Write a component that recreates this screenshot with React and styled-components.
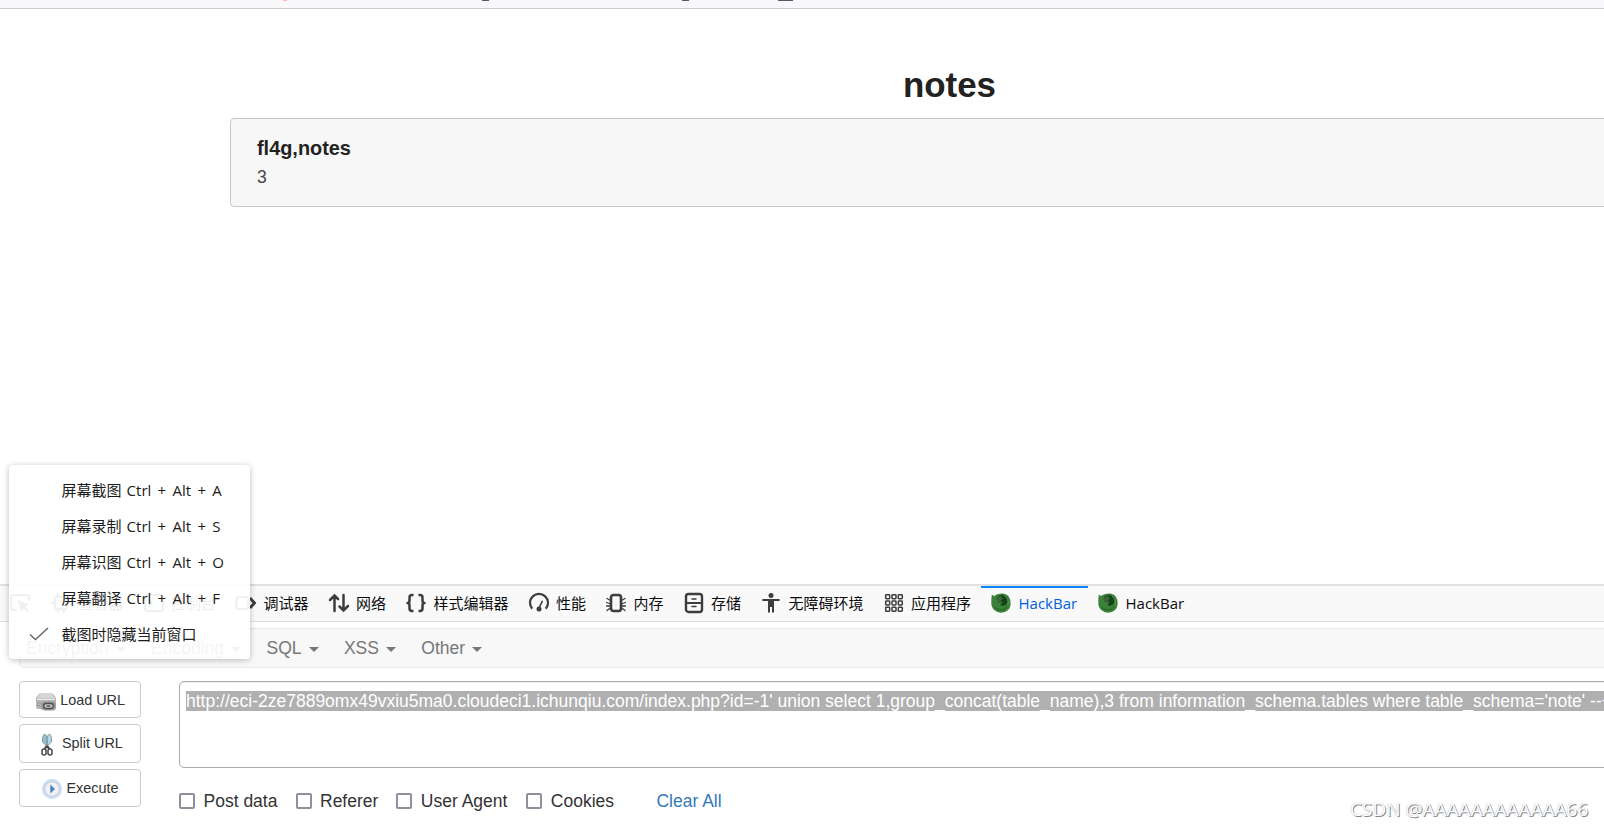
import React from 'react';
import styled, { createGlobalStyle } from 'styled-components';

const Global = createGlobalStyle`
  *, *::before, *::after { box-sizing: border-box; }
  body { margin: 0; background: #fff; overflow: hidden; font-family: "Liberation Sans", Arial, sans-serif; }
`;
const uiFont = '"Open Sans", "Noto Sans CJK SC", sans-serif';

const Page = styled.div`
  position: relative; width: 1604px; height: 828px; overflow: hidden;
  display: flex; flex-direction: column; background: #fff;
`;
const BrowserEdge = styled.div`
  flex: none; height: 9px; background: #f9f9fb; border-bottom: 1px solid #ccc;
  display: flex; padding-left: 283px;
`;
const EdgeMark = styled.i`
  width: ${p => p.$w}px; height: 1px; margin-right: ${p => p.$gap || 0}px; background: ${p => p.$color || '#5b5b66'};
`;
const Site = styled.main`
  flex: none; height: 575px; padding: 54px 0 0 230px;
`;
const SiteTitle = styled.h1`
  margin: 0; width: 1439px; height: 55px; text-align: center;
  font-size: 34.9px; line-height: 43px; color: #222;
`;
const Card = styled.article`
  width: 1440px; height: 89px; padding: 16px 26px; border: 1px solid #c8c8c8; border-radius: 4px; background: #f7f7f7;
`;
const CardTitle = styled.h2`
  margin: 0 0 1px; font-size: 19.9px; line-height: 26px; color: #222; font-variant-ligatures: none;
`;
const CardText = styled.p`
  margin: 0; font-size: 17.5px; line-height: 31px; color: #444;
`;

const ToolTabs = styled.nav`
  flex: none; height: 38px; display: flex; background: #f9f9fa;
  border-top: 2px solid #e0e0e1; border-bottom: 1px solid #e0e0e1;
  font: 15px ${uiFont}; color: #0c0c0d;
`;
const Picker = styled.div`
  flex: none; width: 41px; padding-left: 10px; display: flex; align-items: center;
  &::after { content: ""; width: 1px; height: 24px; background: #ddd; margin-left: 10px; }
`;
const Tab = styled.div`
  display: flex; align-items: center; gap: 7.5px; padding: 0 10px; white-space: nowrap; flex: none;
  line-height: 33px; width: ${p => p.$w}px;
  color: ${p => (p.$active ? '#0060df' : 'inherit')};
  box-shadow: ${p => (p.$active ? 'inset 0 2px #0a84ff' : 'none')};
  span { padding-bottom: 1px; }
  svg { margin-top: -2px; }
`;
const Glyph = styled.svg`
  flex: none; width: 20px; height: 20px; fill: none; stroke: #3d3d3e; stroke-width: 2.2;
  stroke-linecap: round; stroke-linejoin: round; overflow: visible;
`;

const CategoryBar = styled.nav`
  flex: none; height: 40px; margin: 6px 0 0 19px; padding-left: 6px;
  display: flex; gap: 25px; width: 1640px; border: 1px solid #e7e7e7; border-radius: 5px; background: #f8f8f8;
  font-size: 17.5px; line-height: 37px; color: #777;
`;
const Category = styled.span`
  display: flex; align-items: center; gap: 7.4px;
  &::after { content: ""; margin-top: 3px; border: 5px solid transparent; border-top-color: #777; border-bottom: 0; }
`;
const Workspace = styled.section`
  display: flex; gap: 38px; padding: 13px 0 0 19px; width: 1700px;
`;
const Actions = styled.div`
  width: 122px; display: flex; flex-direction: column; gap: 6px;
`;
const Action = styled.button`
  height: ${p => p.$h}px; padding: 0 0 ${p => p.$lift || 0}px ${p => p.$left}px; display: flex; align-items: center; gap: ${p => p.$gap}px;
  background: #fff; border: 1px solid #ccc; border-radius: 4px;
  font: 14.4px "Liberation Sans", Arial, sans-serif; color: #333; white-space: nowrap;
  svg { flex: none; margin-top: ${p => p.$drop}px; }
`;
const Editor = styled.div`
  flex: 1;
`;
const UrlBox = styled.div`
  height: 87px; padding: 9px 6px; border: 1px solid #ababab; border-radius: 5px;
  box-shadow: inset 0 1px 1px rgba(0,0,0,.075);
`;
const Selected = styled.span`
  display: block; height: 20px; line-height: 20px; font-size: 17.5px; white-space: nowrap;
  background: #b0b0b0; color: #fff;
`;
const Options = styled.div`
  height: 24px; margin-top: 21px; display: flex; align-items: center; font-size: 17.5px; line-height: 24px; color: #333;
`;
const Option = styled.label`
  display: flex; align-items: center; gap: 8.5px; width: ${p => p.$w}px; white-space: nowrap;
`;
const Box = styled.input`
  appearance: none; flex: none; width: 16px; height: 16px; margin: 0 0 1px; border: 2px solid #8f8f9d; border-radius: 2px; background: #fff;
`;
const ClearLink = styled.a`
  color: #337ab7;
`;

const Menu = styled.div`
  position: absolute; left: 9px; top: 465px; width: 241px; height: 194px; padding: 7px 0;
  background: rgba(255,255,255,.92); border-radius: 4px; box-shadow: 0 1px 6px rgba(0,0,0,.25);
  font: 15px ${uiFont}; color: #1c1c1c;
`;
const MenuItem = styled.div`
  height: 36px; line-height: 35px; display: flex; align-items: center; white-space: nowrap;
`;
const Keys = styled.span`
  margin-left: 5.2px; word-spacing: 2.4px;
`;
const CheckSlot = styled.span`
  width: 52.4px; padding-left: 20px; display: flex;
`;
const Watermark = styled.div`
  position: absolute; left: 1350px; top: 796px; font: 19px/27px ${uiFont}; color: #fff; white-space: nowrap;
  text-shadow: 1px 1px 0 #888, 0 0 1px #aaa;
`;

const icons = {
  pick: <Glyph viewBox="0 0 20 20"><path d="M6 16H3.5A2.5 2.5 0 0 1 1 13.500V3.500A2.500 2.500 0 0 1 3.500 1H16.500A2.500 2.500 0 0 1 19 3.500V6" /><path d="M8 6l3 12 2.500-4 4 4 1.500-1.500-4-4 4-2z" fill="#3d3d3e" stroke="none" /></Glyph>,
  inspector: <Glyph viewBox="0 0 20 20"><rect x="4" y="4" width="12" height="12" rx="2" /><path d="M7 1v2M13 1v2M7 17v2M13 17v2M1 10h2M17 10h2" /></Glyph>,
  console: <Glyph viewBox="0 0 20 20"><rect x="1" y="2" width="18" height="16" rx="2.500" /><path d="M5 7l3 3-3 3" /></Glyph>,
  debug: <Glyph viewBox="0 0 20 20"><rect x="0.500" y="4" width="12" height="12" rx="2.500" /><path d="M14 5l4.500 5L14 15" strokeWidth="2.800" strokeLinecap="butt" strokeLinejoin="miter" /></Glyph>,
  network: <Glyph viewBox="0 0 20 20"><path d="M5.500 18V2.500M1 7l4.500-4.500L9 6M14.500 2v15.500M10.500 13.500l4 4 4.500-4.500" strokeWidth="2.500" strokeLinejoin="miter" /></Glyph>,
  style: <Glyph viewBox="0 0 20 20"><path d="M7.500 2H6Q3.500 2 3.500 4.500V7.500Q3.500 10 1.500 10 3.500 10 3.500 12.500V15.500Q3.500 18 6 18H7.500M12.500 2H14Q16.500 2 16.500 4.500V7.500Q16.500 10 18.500 10 16.500 10 16.500 12.500V15.500Q16.500 18 14 18H12.500" strokeWidth="2.500" strokeLinecap="butt" /></Glyph>,
  perf: <Glyph viewBox="0 0 20 20"><path d="M3.200 15.800A9 9 0 1 1 16.800 15.800" strokeLinecap="butt" /><path d="M10.500 14L13.200 8.500" strokeWidth="1.700" /><circle cx="10" cy="16" r="2.500" fill="#3d3d3e" stroke="none" /></Glyph>,
  memory: <Glyph viewBox="0 0 20 20"><rect x="5" y="2" width="10" height="16" rx="2.500" strokeWidth="2.600" /><path d="M3.600 7L1 5.500M3.600 10.500L.5 9.500M3.600 13L.5 13M3.600 15.500L1 17.500M16.400 7L19 5.500M16.400 10.500L19.500 9.500M16.400 13L19.500 13M16.400 15.500L19 17.500" strokeWidth="1.300" /></Glyph>,
  storage: <Glyph viewBox="0 0 20 20"><rect x="2" y="1" width="16" height="18" rx="2.500" strokeWidth="2.400" /><path d="M2 10h16" strokeWidth="2" /><path d="M8 6h4M8 13.500h4" strokeWidth="1.500" /></Glyph>,
  access: <Glyph viewBox="0 0 20 20"><g fill="#3d3d3e" stroke="none"><circle cx="10" cy="2.500" r="2.500" /><path d="M2 6H18Q18.800 6 18.800 7T18 8H13V19.500H11V14H9V19.500H7V8H2Q1.200 8 1.200 7T2 6Z" /></g></Glyph>,
  apps: <Glyph viewBox="0 0 20 20" ><g strokeWidth="1.500">{[1.700, 8, 14.300].map(y => [1.700, 8, 14.300].map(x => <rect key={`${x}-${y}`} x={x} y={y} width="4" height="4" rx=".7" />))}</g></Glyph>,
  hack: <Glyph viewBox="0 0 20 20"><g stroke="none"><path d="M.8 1.500L3 3Q6 .2 11 .4 16 .6 18 4 20 7 19.700 11 19 19 10 19.700 2 19 .4 12 0 7 .8 1.500Z" fill="#3b8339" /><path d="M6 4Q11 0 16 4 18 7 16.500 10 14 14 9 12 11 11 11 9L7 7Z" fill="#17431b" /><path d="M5 6Q7 3 10 3L12 6 9 8 10 10 7 10Z" fill="#3f653b" /><path d="M2 9Q3 16 10 16 15 16 17 11 16 18 10 18 3 18 2 9Z" fill="#2c6c2c" /><path d="M14 3Q18 6 17 11" fill="none" stroke="#5ca653" strokeWidth="1" /></g></Glyph>,
};

const LoadIcon = () => (
  <svg width="20" height="19" viewBox="0 0 20 19">
    <path d="M4 1h12q3 2 4 6v8q0 2-2 2H2q-2 0-2-2V7Q1 3 4 1Z" fill="#b5b5b5" />
    <path d="M4 1h12l3 5.500H1Z" fill="#d6d6d6" />
    <path d="M1 7.500h18" stroke="#eee" />
    <path d="M1 11h4M1 13.500h3" stroke="#999" />
    <rect x="5" y="9.500" width="15" height="9" rx="4" fill="#999" />
    <rect x="7.700" y="11.500" width="9.600" height="5" rx="2.400" fill="#ccc" stroke="#4c4c4c" strokeWidth="1.300" />
    <path d="M10.500 14h4" stroke="#444" strokeWidth="1.300" />
  </svg>
);
const ScissorsIcon = () => (
  <svg width="12" height="24" viewBox="0 0 12 24">
    <path d="M5.600 13L1.500 9Q.5 4 3.500 1L5.700 3Z" fill="#9bc0cd" stroke="#7d9ba6" />
    <path d="M6.400 13L10.500 9Q11.500 4 8.500 1L6.300 3Z" fill="#b8d6df" stroke="#7d9ba6" />
    <path d="M6 13L3.500 16M6 13L8.500 16" stroke="#444" strokeWidth="2" />
    <rect x="1" y="16" width="4" height="6" rx="2" fill="none" stroke="#505050" strokeWidth="1.600" />
    <rect x="7" y="16" width="4" height="6" rx="2" fill="none" stroke="#505050" strokeWidth="1.600" />
  </svg>
);
const RunIcon = () => (
  <svg width="20" height="20" viewBox="0 0 20 20">
    <circle cx="10" cy="10" r="9" fill="#e6eaf2" stroke="#c6ddf8" strokeWidth="2" />
    <circle cx="10" cy="10" r="7.300" fill="#f1f2f6" stroke="#c3c9d5" />
    <path d="M8.300 5.500L13 10 8.300 14.500Z" fill="#4a82c4" />
  </svg>
);

const tabs = [
  ['inspector', '查看器', 92.5], ['console', '控制台', 92.5], ['debug', '调试器', 92.5], ['network', '网络', 77.5],
  ['style', '样式编辑器', 122.5], ['perf', '性能', 77.5], ['memory', '内存', 77.5], ['storage', '存储', 77.5],
  ['access', '无障碍环境', 122.5], ['apps', '应用程序', 107.5], ['hack', 'HackBar', 107, true], ['hack', 'HackBar', 107],
];
const shortcuts = [['屏幕截图', 'A'], ['屏幕录制', 'S'], ['屏幕识图', 'O'], ['屏幕翻译', 'F']];
const options = [['Post data', 116.5], ['Referer', 100.8], ['User Agent', 130], ['Cookies', 130.2]];

export default function App() {
  return (
    <Page>
      <Global />
      <BrowserEdge>
        <EdgeMark $w={4} $gap={195} $color="#ffb5c0" />
        <EdgeMark $w={7} $gap={193} />
        <EdgeMark $w={7} $gap={89} />
        <EdgeMark $w={15} />
      </BrowserEdge>
      <Site>
        <SiteTitle>notes</SiteTitle>
        <Card>
          <CardTitle>fl4g,notes</CardTitle>
          <CardText>3</CardText>
        </Card>
      </Site>
      <ToolTabs>
        <Picker>{icons.pick}</Picker>
        {tabs.map(([icon, label, w, active], i) => (
          <Tab key={i} $w={w} $active={active}>{icons[icon]}<span>{label}</span></Tab>
        ))}
      </ToolTabs>
      <CategoryBar>
        {['Encryption', 'Encoding', 'SQL', 'XSS', 'Other'].map(c => <Category key={c}>{c}</Category>)}
      </CategoryBar>
      <Workspace>
        <Actions>
          <Action $h={37} $left={16} $gap={4.2} $drop={4}><LoadIcon />Load URL</Action>
          <Action $h={39} $left={21} $gap={9} $drop={4} $lift={2}><ScissorsIcon />Split URL</Action>
          <Action $h={38} $left={22} $gap={4.4} $drop={2}><RunIcon />Execute</Action>
        </Actions>
        <Editor>
          <UrlBox>
            <Selected>http://eci-2ze7889omx49vxiu5ma0.cloudeci1.ichunqiu.com/index.php?id=-1' union select 1,group_concat(table_name),3 from information_schema.tables where table_schema='note' --+</Selected>
          </UrlBox>
          <Options>
            {options.map(([label, w]) => <Option key={label} $w={w}><Box type="checkbox" />{label}</Option>)}
            <ClearLink>Clear All</ClearLink>
          </Options>
        </Editor>
      </Workspace>
      <Menu>
        {shortcuts.map(([label, key]) => (
          <MenuItem key={key}><CheckSlot />{label}<Keys>{`Ctrl + Alt + ${key}`}</Keys></MenuItem>
        ))}
        <MenuItem>
          <CheckSlot>
            <svg width="20" height="14" viewBox="0 0 20 14"><path d="M1 7.500L6.500 12.500 19 1" fill="none" stroke="#666" strokeWidth="1.500" /></svg>
          </CheckSlot>
          截图时隐藏当前窗口
        </MenuItem>
      </Menu>
      <Watermark>CSDN @AAAAAAAAAAAA66</Watermark>
    </Page>
  );
}
